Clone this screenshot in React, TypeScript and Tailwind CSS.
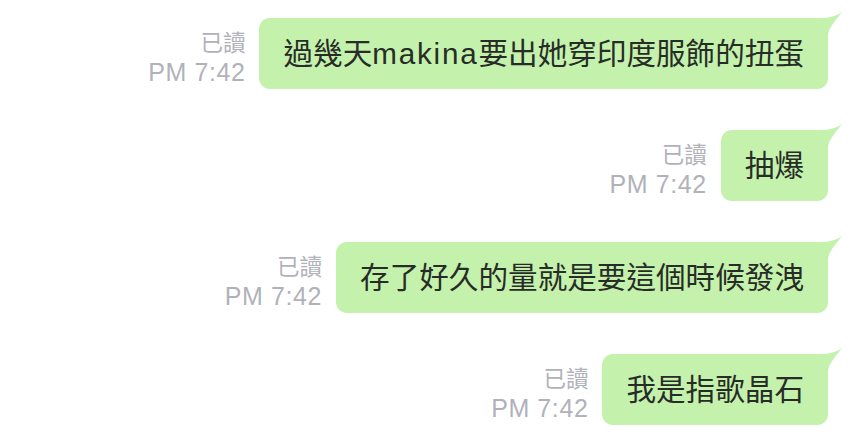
const messages = [
  { text: ["過幾天", "makina", "要出她穿印度服飾的扭蛋"], time: "PM 7:42" },
  { text: ["抽爆"], time: "PM 7:42" },
  { text: ["存了好久的量就是要這個時候發洩"], time: "PM 7:42" },
  { text: ["我是指歌晶石"], time: "PM 7:42" },
];

function Tail() {
  return (
    <svg
      className="absolute right-[-14px] top-[-6px]"
      width="24"
      height="24"
      viewBox="0 0 24 24"
    >
      <path d="M0 6 C8 6 18 5 24 0 C18 8 12 14 10 22 L10 24 L0 24 Z" fill="#c4f2ad" />
    </svg>
  );
}

function Message({ text, time }: { text: string[]; time: string }) {
  return (
    <div className="flex items-end justify-end pr-[28px]">
      <div className="mr-[14px] mb-[3px] flex flex-col items-end text-[#b1b2b9]">
        <span className="text-[22.5px] leading-[28px]">已讀</span>
        <span className="text-[25px] leading-[28px] tracking-[0.6px]">{time}</span>
      </div>
      <div className="relative rounded-[11px] bg-[#c4f2ad] px-[24px] py-[17px] text-[29.6px] leading-[37px] text-[#282c27]">
        <Tail />
        <span className="relative">
          {text.map((t, i) =>
            /[a-z]/.test(t) ? (
              <span key={i} className="tracking-[1.8px]">{t}</span>
            ) : (
              <span key={i}>{t}</span>
            )
          )}
        </span>
      </div>
    </div>
  );
}

export default function App() {
  return (
    <div
      className="flex h-[446px] w-[856px] flex-col gap-[41px] bg-white pt-[18px]"
      style={{ fontFamily: '"Liberation Sans", "Noto Sans CJK TC", sans-serif' }}
    >
      {messages.map((m, i) => (
        <Message key={i} text={m.text} time={m.time} />
      ))}
    </div>
  );
}
